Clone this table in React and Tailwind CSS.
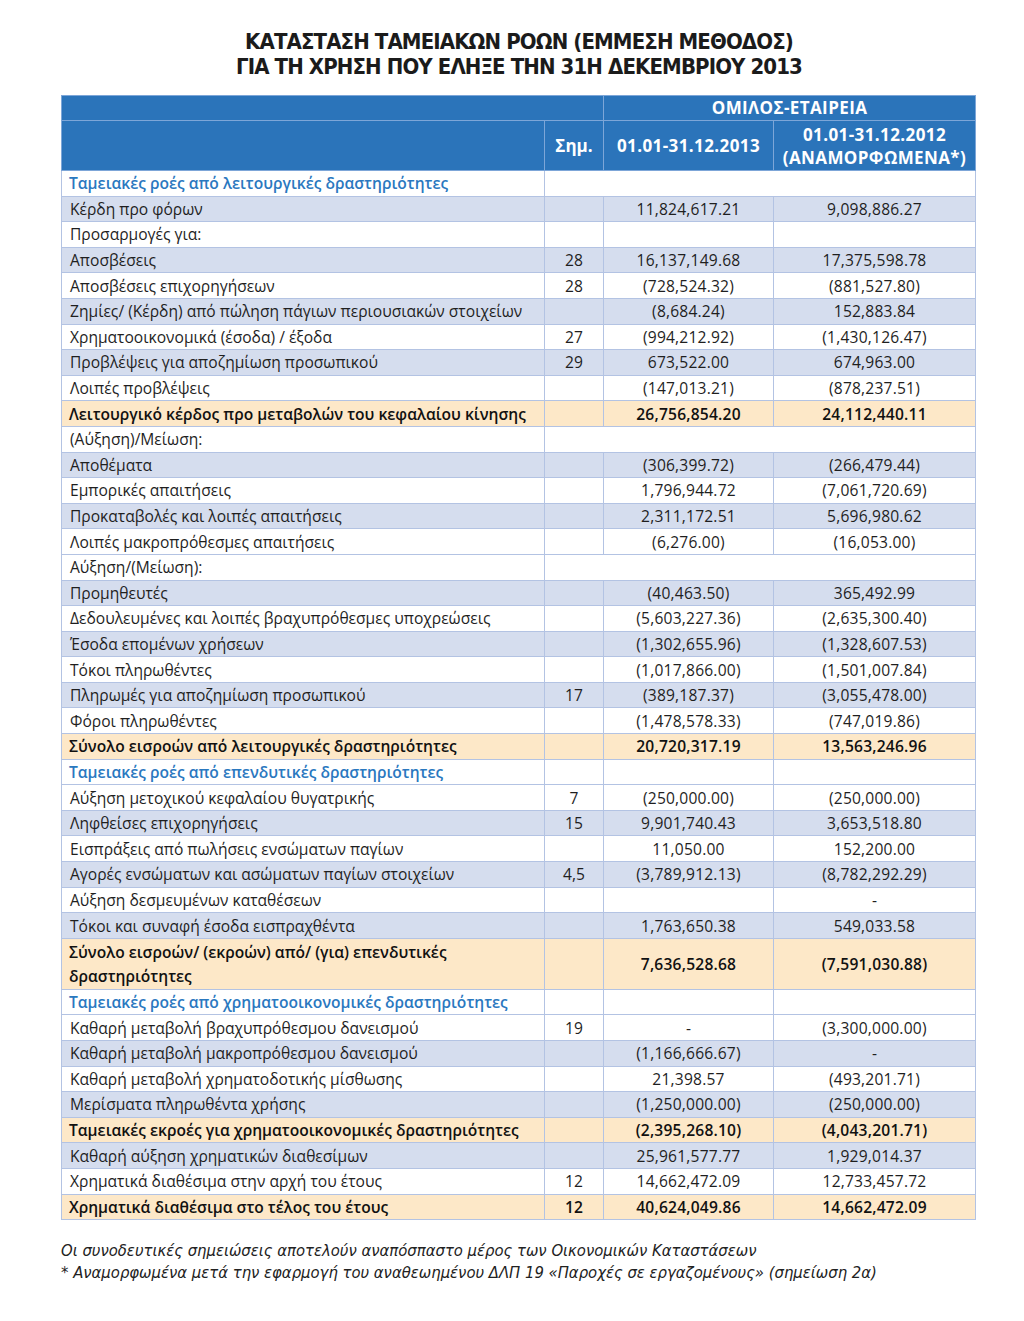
import React from "react";

const rows = [
  { label: "Ταμειακές ροές από λειτουργικές δραστηριότητες", kind: "section", merged: true },
  { label: "Κέρδη προ φόρων", a: "11,824,617.21", b: "9,098,886.27", bg: "blue" },
  { label: "Προσαρμογές για:" },
  { label: "Αποσβέσεις", note: "28", a: "16,137,149.68", b: "17,375,598.78", bg: "blue" },
  { label: "Αποσβέσεις επιχορηγήσεων", note: "28", a: "(728,524.32)", b: "(881,527.80)" },
  { label: "Ζημίες/ (Κέρδη) από πώληση πάγιων περιουσιακών στοιχείων", a: "(8,684.24)", b: "152,883.84", bg: "blue" },
  { label: "Χρηματοοικονομικά (έσοδα) / έξοδα", note: "27", a: "(994,212.92)", b: "(1,430,126.47)" },
  { label: "Προβλέψεις για αποζημίωση προσωπικού", note: "29", a: "673,522.00", b: "674,963.00", bg: "blue" },
  { label: "Λοιπές προβλέψεις", a: "(147,013.21)", b: "(878,237.51)" },
  { label: "Λειτουργικό κέρδος προ μεταβολών του κεφαλαίου κίνησης", a: "26,756,854.20", b: "24,112,440.11", kind: "total" },
  { label: "(Αύξηση)/Μείωση:", merged: true },
  { label: "Αποθέματα", a: "(306,399.72)", b: "(266,479.44)", bg: "blue" },
  { label: "Εμπορικές απαιτήσεις", a: "1,796,944.72", b: "(7,061,720.69)" },
  { label: "Προκαταβολές και λοιπές απαιτήσεις", a: "2,311,172.51", b: "5,696,980.62", bg: "blue" },
  { label: "Λοιπές μακροπρόθεσμες απαιτήσεις", a: "(6,276.00)", b: "(16,053.00)" },
  { label: "Αύξηση/(Μείωση):", merged: true },
  { label: "Προμηθευτές", a: "(40,463.50)", b: "365,492.99", bg: "blue" },
  { label: "Δεδουλευμένες και λοιπές βραχυπρόθεσμες υποχρεώσεις", a: "(5,603,227.36)", b: "(2,635,300.40)" },
  { label: "Έσοδα επομένων χρήσεων", a: "(1,302,655.96)", b: "(1,328,607.53)", bg: "blue" },
  { label: "Τόκοι πληρωθέντες", a: "(1,017,866.00)", b: "(1,501,007.84)" },
  { label: "Πληρωμές για αποζημίωση προσωπικού", note: "17", a: "(389,187.37)", b: "(3,055,478.00)", bg: "blue" },
  { label: "Φόροι πληρωθέντες", a: "(1,478,578.33)", b: "(747,019.86)" },
  { label: "Σύνολο εισροών από λειτουργικές δραστηριότητες", a: "20,720,317.19", b: "13,563,246.96", kind: "total" },
  { label: "Ταμειακές ροές από επενδυτικές δραστηριότητες", kind: "section" },
  { label: "Αύξηση μετοχικού κεφαλαίου θυγατρικής", note: "7", a: "(250,000.00)", b: "(250,000.00)" },
  { label: "Ληφθείσες επιχορηγήσεις", note: "15", a: "9,901,740.43", b: "3,653,518.80", bg: "blue" },
  { label: "Εισπράξεις από πωλήσεις ενσώματων παγίων", a: "11,050.00", b: "152,200.00" },
  { label: "Αγορές ενσώματων και ασώματων παγίων στοιχείων", note: "4,5", a: "(3,789,912.13)", b: "(8,782,292.29)", bg: "blue" },
  { label: "Αύξηση δεσμευμένων καταθέσεων", b: "-" },
  { label: "Τόκοι και συναφή έσοδα εισπραχθέντα", a: "1,763,650.38", b: "549,033.58", bg: "blue" },
  { label: "Σύνολο εισροών/ (εκροών) από/ (για) επενδυτικές δραστηριότητες", a: "7,636,528.68", b: "(7,591,030.88)", kind: "total", tall: true },
  { label: "Ταμειακές ροές από χρηματοοικονομικές δραστηριότητες", kind: "section" },
  { label: "Καθαρή μεταβολή βραχυπρόθεσμου δανεισμού", note: "19", a: "-", b: "(3,300,000.00)" },
  { label: "Καθαρή μεταβολή μακροπρόθεσμου δανεισμού", a: "(1,166,666.67)", b: "-", bg: "blue" },
  { label: "Καθαρή μεταβολή χρηματοδοτικής μίσθωσης", a: "21,398.57", b: "(493,201.71)" },
  { label: "Μερίσματα πληρωθέντα χρήσης", a: "(1,250,000.00)", b: "(250,000.00)", bg: "blue" },
  { label: "Ταμειακές εκροές για χρηματοοικονομικές δραστηριότητες", a: "(2,395,268.10)", b: "(4,043,201.71)", kind: "total" },
  { label: "Καθαρή αύξηση χρηματικών διαθεσίμων", a: "25,961,577.77", b: "1,929,014.37", bg: "blue" },
  { label: "Χρηματικά διαθέσιμα στην αρχή του έτους", note: "12", a: "14,662,472.09", b: "12,733,457.72" },
  { label: "Χρηματικά διαθέσιμα στο τέλος του έτους", note: "12", a: "40,624,049.86", b: "14,662,472.09", kind: "total" },
];

const cell = "border border-[#b3c3e3] p-0 align-middle";
const narrow = '"Liberation Sans Narrow", "DejaVu Sans Condensed", "Roboto", sans-serif';

function Row({ r }) {
  const bg =
    r.kind === "total" ? "bg-[#fde8c8]" : r.bg === "blue" ? "bg-[#d5ddee]" : "bg-white";
  const h = r.tall ? "h-[51px]" : "h-[25.6px]";
  const labelCls =
    r.kind === "section"
      ? "text-[#2a78bf] font-semibold pl-[7px]"
      : r.kind === "total"
      ? "font-semibold text-[#111] pl-[7px]"
      : "text-[#1f1f1f] pl-[8px]";
  const num = r.kind === "total" ? "font-semibold text-[#111]" : "text-[#1f1f1f]";
  return (
    <tr className={`${bg} ${h}`}>
      <td className={`${cell} ${labelCls} leading-[24px] ${r.tall ? "" : "whitespace-nowrap"}`}>{r.label}</td>
      {r.merged ? (
        <td colSpan={3} className={cell}></td>
      ) : (
        <>
          <td className={`${cell} text-center ${num} leading-[20px]`}>{r.note}</td>
          <td className={`${cell} text-center ${num} leading-[20px] tracking-[0.2px]`}>{r.a}</td>
          <td className={`${cell} text-center ${num} leading-[20px] tracking-[0.2px]`}>{r.b}</td>
        </>
      )}
    </tr>
  );
}

export default function App() {
  return (
    <div className="w-[1024px] h-[1321px] bg-white" style={{ fontFamily: '"Open Sans", "Noto Sans", sans-serif' }}>
      <div
        className="pt-[29px] text-center text-[22px] leading-[25px] font-bold tracking-[-0.9px] text-[#1b1b1b]"
        style={{ fontFamily: narrow }}
      >
        <div className="pl-[14px]">ΚΑΤΑΣΤΑΣΗ ΤΑΜΕΙΑΚΩΝ ΡΟΩΝ (ΕΜΜΕΣΗ ΜΕΘΟΔΟΣ)</div>
        <div className="pl-[14px]">ΓΙΑ ΤΗ ΧΡΗΣΗ ΠΟΥ ΕΛΗΞΕ ΤΗΝ 31Η ΔΕΚΕΜΒΡΙΟΥ 2013</div>
      </div>

      <div className="pl-[61px] pt-[16px]">
        <table className="table-fixed border-collapse w-[914px] text-[15.6px]">
          <colgroup>
            <col className="w-[483px]" />
            <col className="w-[59px]" />
            <col className="w-[170px]" />
            <col className="w-[202px]" />
          </colgroup>
          <thead className="bg-[#2b74ba] text-white font-bold text-[17px] tracking-[0.4px]">
            <tr className="h-[25px]">
              <td colSpan={2} className="border border-[#7da6d8] p-0"></td>
              <td colSpan={2} className="border border-[#7da6d8] p-0 text-center leading-[20px]">
                ΟΜΙΛΟΣ-ΕΤΑΙΡΕΙΑ
              </td>
            </tr>
            <tr className="h-[50px]">
              <td className="border border-[#7da6d8] p-0"></td>
              <td className="border border-[#7da6d8] p-0 text-center tracking-normal">Σημ.</td>
              <td className="border border-[#7da6d8] p-0 text-center">01.01-31.12.2013</td>
              <td className="border border-[#7da6d8] p-0 text-center leading-[23px]">
                01.01-31.12.2012
                <br />
                (ΑΝΑΜΟΡΦΩΜΕΝΑ*)
              </td>
            </tr>
          </thead>
          <tbody>
            {rows.map((r, i) => (
              <Row key={i} r={r} />
            ))}
          </tbody>
        </table>
      </div>

      <div
        className="pl-[61px] pt-[20px] text-[16.5px] leading-[22px] italic text-[#222]"
        style={{ fontFamily: narrow }}
      >
        <div>Οι συνοδευτικές σημειώσεις αποτελούν αναπόσπαστο μέρος των Οικονομικών Καταστάσεων</div>
        <div>* Αναμορφωμένα μετά την εφαρμογή του αναθεωημένου ΔΛΠ 19 «Παροχές σε εργαζομένους» (σημείωση 2α)</div>
      </div>
    </div>
  );
}
